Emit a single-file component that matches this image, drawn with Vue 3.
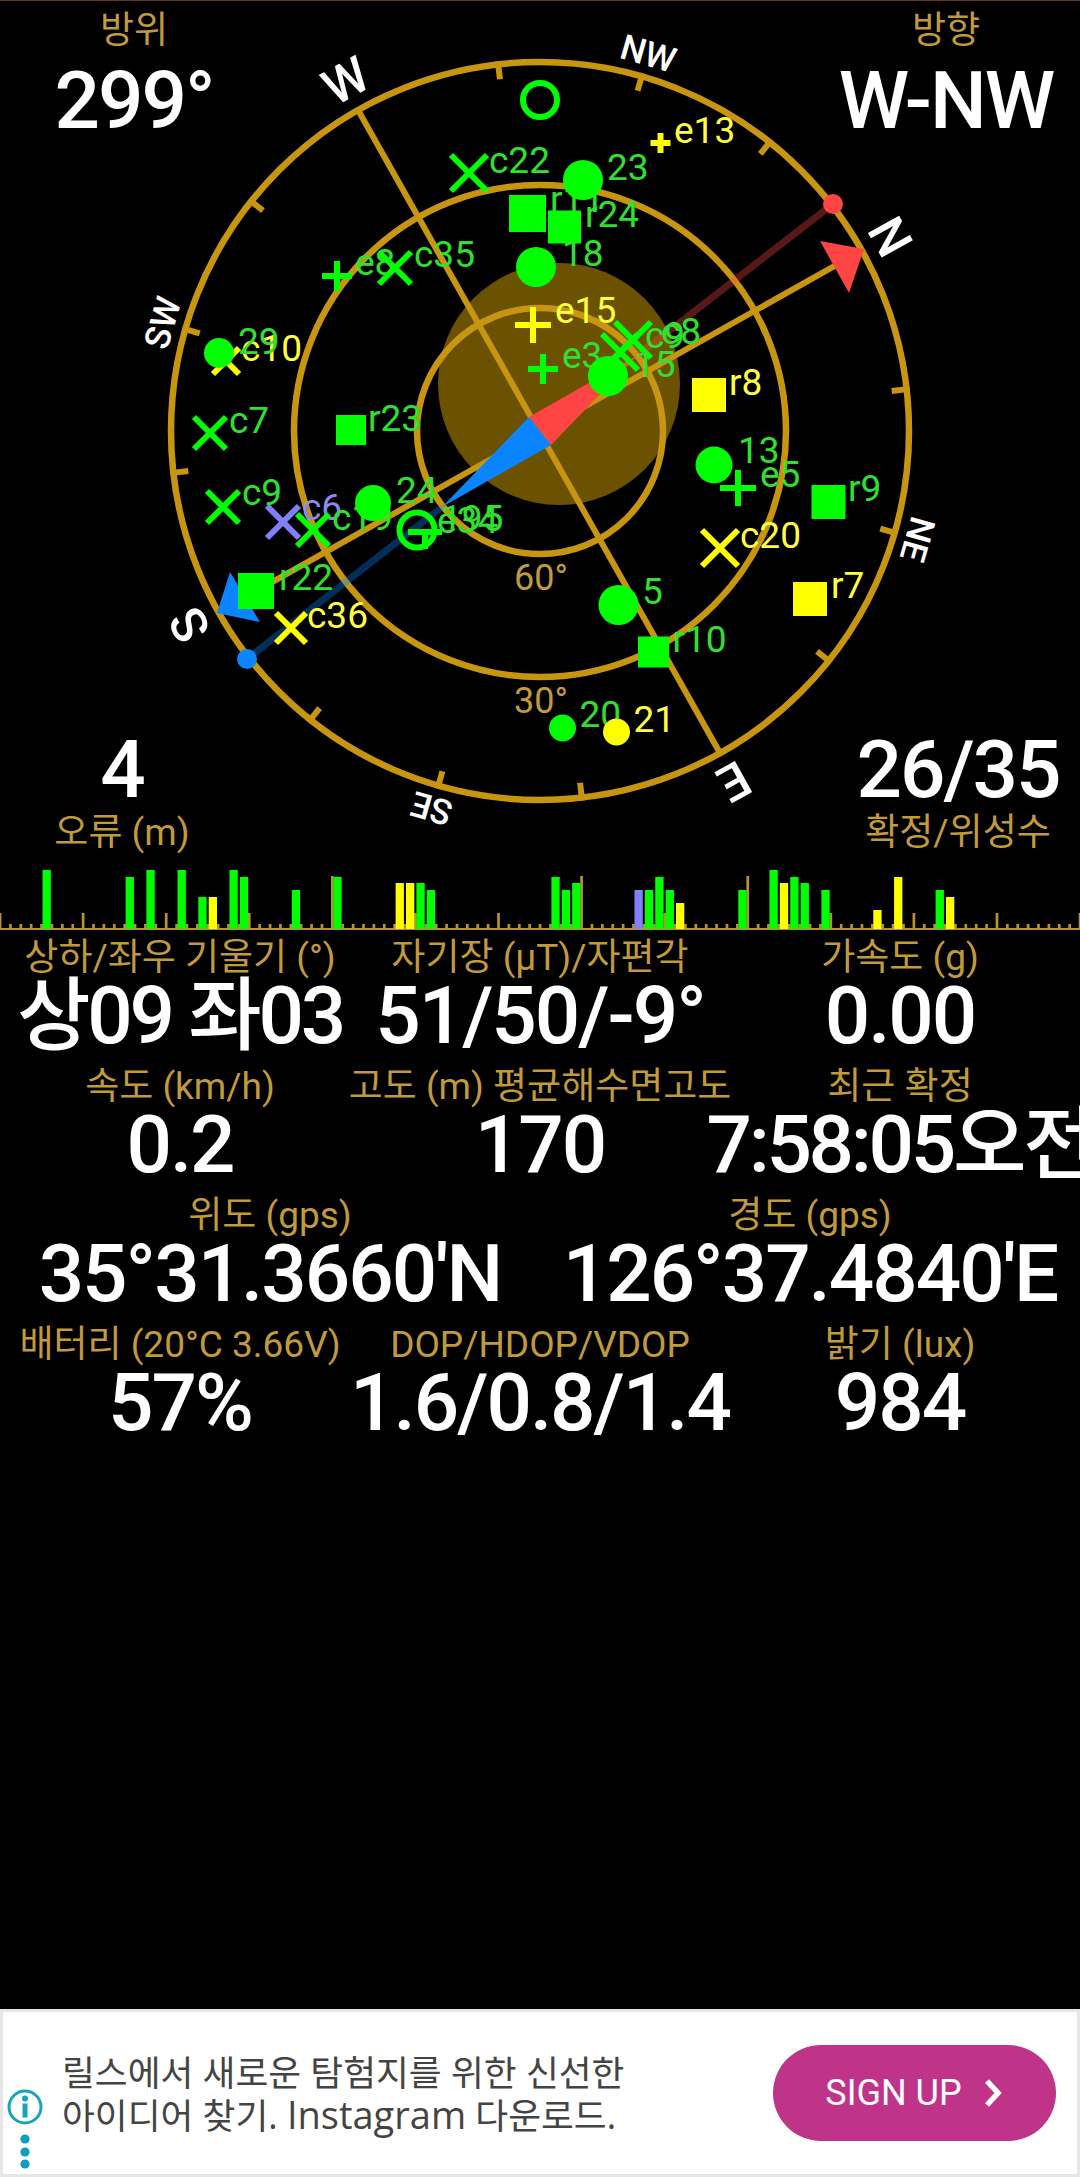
<script setup>
const CX = 540
const CY = 431
const R = 369

const directions = [
  { text: 'N', angle: 61, big: true },
  { text: 'NE', angle: 106 },
  { text: 'E', angle: 151, big: true },
  { text: 'SE', angle: 196 },
  { text: 'S', angle: 241, big: true },
  { text: 'SW', angle: 286 },
  { text: 'W', angle: 331, big: true },
  { text: 'NW', angle: 16 }
]

// every 22.5 deg, the four axis ends have the long lines instead
const ticks = Array.from({ length: 16 }, (_, i) => 61 + i * 22.5).filter((_, i) => i % 4 !== 0)

const GREEN = '#00ff00'
const YELLOW = '#ffff00'
const PURPLE = '#8080ff'

const sats = [
  { kind: 'x', x: 226, y: 361, s: 13, color: YELLOW, label: 'c10', lx: 241, ly: 361 },
  { kind: 'dot', x: 219, y: 353, s: 15, color: GREEN, label: '29', lx: 238, ly: 354 },
  { kind: 'x', x: 210, y: 433, s: 16, color: GREEN, label: 'c7', lx: 229, ly: 433 },
  { kind: 'x', x: 223, y: 507, s: 16, color: GREEN, label: 'c9', lx: 242, ly: 505 },
  { kind: 'x', x: 283, y: 522, s: 16, color: PURPLE, label: 'c6', lx: 302, ly: 520 },
  { kind: 'x', x: 313, y: 530, s: 16, color: GREEN, label: 'c19', lx: 332, ly: 530 },
  { kind: 'dot', x: 373, y: 503, s: 18, color: GREEN, label: '24', lx: 396, ly: 503 },
  { kind: 'tee', x: 425, y: 532, s: 17, color: GREEN, label: 'e34', lx: 437, ly: 533 },
  { kind: 'ring', x: 417, y: 530, s: 17.5, color: GREEN, label: '195', lx: 441, ly: 531 },
  { kind: 'square', x: 256, y: 591, s: 18, color: GREEN, label: 'r22', lx: 279, ly: 590 },
  { kind: 'x', x: 291, y: 628, s: 15, color: YELLOW, label: 'c36', lx: 307, ly: 628 },
  { kind: 'square', x: 351, y: 430, s: 15, color: GREEN, label: 'r23', lx: 368, ly: 431 },
  { kind: 'x', x: 469, y: 173, s: 18, color: GREEN, label: 'c22', lx: 489, ly: 173 },
  { kind: 'plus', x: 337, y: 276, s: 15, color: GREEN, label: 'e8', lx: 355, ly: 275 },
  { kind: 'x', x: 395, y: 268, s: 16, color: GREEN, label: 'c35', lx: 414, ly: 267 },
  { kind: 'ring', x: 540, y: 100, s: 17, color: GREEN },
  { kind: 'square', x: 527.5, y: 213.5, s: 18.5, color: GREEN, label: 'r11', lx: 550, ly: 212 },
  { kind: 'dot', x: 583, y: 180, s: 20, color: GREEN, label: '23', lx: 607, ly: 180 },
  { kind: 'square', x: 564.5, y: 227, s: 16.5, color: GREEN, label: 'r24', lx: 585, ly: 227 },
  { kind: 'dot', x: 536, y: 267, s: 20, color: GREEN, label: '18', lx: 562, ly: 266 },
  { kind: 'plus', x: 660.5, y: 143, s: 10, color: YELLOW, label: 'e13', lx: 674, ly: 143 },
  { kind: 'plus', x: 533, y: 325, s: 18, color: YELLOW, label: 'e15', lx: 555, ly: 323 },
  { kind: 'plus', x: 543, y: 369, s: 15, color: GREEN, label: 'e3', lx: 562, ly: 368 },
  { kind: 'x', x: 620, y: 352, s: 18, color: GREEN, label: 'c9', lx: 645, ly: 348 },
  { kind: 'x', x: 633, y: 340, s: 18, color: GREEN, label: 'c8', lx: 661, ly: 344 },
  { kind: 'dot', x: 608, y: 376, s: 20, color: GREEN, label: '15', lx: 634, ly: 377 },
  { kind: 'square', x: 709, y: 395, s: 17, color: YELLOW, label: 'r8', lx: 729, ly: 395 },
  { kind: 'dot', x: 714, y: 465, s: 18.5, color: GREEN, label: '13', lx: 738, ly: 463 },
  { kind: 'plus', x: 738, y: 488, s: 18, color: GREEN, label: 'e5', lx: 760, ly: 487 },
  { kind: 'square', x: 828.5, y: 502, s: 17, color: GREEN, label: 'r9', lx: 848, ly: 501 },
  { kind: 'x', x: 720, y: 548, s: 18, color: YELLOW, label: 'c20', lx: 740, ly: 548 },
  { kind: 'square', x: 810, y: 599, s: 17, color: YELLOW, label: 'r7', lx: 831, ly: 598 },
  { kind: 'dot', x: 618.5, y: 605, s: 20, color: GREEN, label: '5', lx: 642, ly: 604 },
  { kind: 'square', x: 653.5, y: 652, s: 15.5, color: GREEN, label: 'r10', lx: 672.5, ly: 652 },
  { kind: 'dot', x: 562.5, y: 728, s: 13.5, color: GREEN, label: '20', lx: 579.5, ly: 727 },
  { kind: 'dot', x: 616.5, y: 732, s: 13.5, color: YELLOW, label: '21', lx: 633.5, ly: 732 }
]

function labelColor(color) {
  if (color === GREEN) return '#30e030'
  if (color === YELLOW) return '#ffff40'
  return '#8a8ae8'
}

function crossPath(s) {
  if (s.kind === 'x') {
    return `M${s.x - s.s} ${s.y - s.s}L${s.x + s.s} ${s.y + s.s}M${s.x - s.s} ${s.y + s.s}L${s.x + s.s} ${s.y - s.s}`
  }
  // the top arm of this one isn't visible in the shot
  if (s.kind === 'tee') {
    return `M${s.x - s.s} ${s.y}H${s.x + s.s}M${s.x} ${s.y}V${s.y + s.s}`
  }
  return `M${s.x - s.s} ${s.y}H${s.x + s.s}M${s.x} ${s.y - s.s}V${s.y + s.s}`
}

// signal strength chart: 104 slots across the width, long tick every 8
const SLOT = 1080 / 104
const BASE = 64
const slots = Array.from({ length: 105 }, (_, i) => i)
const tallTicks = [32, 56, 72]

function tickHeight(i) {
  if (tallTicks.includes(i)) return 53
  return i % 8 === 0 ? 16 : 5
}

const bars = [
  [4, 59, GREEN], [12, 52, GREEN], [14, 59, GREEN], [17, 59, GREEN], [19, 32, GREEN], [20, 32, YELLOW],
  [22, 59, GREEN], [23, 52, GREEN], [28, 39, GREEN], [32, 52, GREEN], [38, 46, YELLOW], [39, 46, YELLOW],
  [40, 46, GREEN], [41, 39, GREEN], [53, 52, GREEN], [54, 39, GREEN], [55, 46, GREEN], [61, 39, PURPLE],
  [62, 39, GREEN], [63, 52, GREEN], [64, 39, GREEN], [65, 26, YELLOW], [71, 39, GREEN], [74, 59, GREEN],
  [75, 46, YELLOW], [76, 52, GREEN], [77, 46, GREEN], [79, 39, GREEN], [84, 19, YELLOW], [86, 52, YELLOW],
  [90, 39, GREEN], [91, 32, YELLOW]
]

const statRows = [
  [
    { label: '상하/좌우 기울기 (°)', value: '상09 좌03', tight: true },
    { label: '자기장 (µT)/자편각', value: '51/50/-9°' },
    { label: '가속도 (g)', value: '0.00' }
  ],
  [
    { label: '속도 (km/h)', value: '0.2' },
    { label: '고도 (m) 평균해수면고도', value: '170' },
    { label: '최근 확정', value: '7:58:05오전', tight: true }
  ],
  [
    { label: '위도 (gps)', value: "35°31.3660'N" },
    { label: '경도 (gps)', value: "126°37.4840'E" }
  ],
  [
    { label: '배터리 (20°C 3.66V)', value: '57%' },
    { label: 'DOP/HDOP/VDOP', value: '1.6/0.8/1.4' },
    { label: '밝기 (lux)', value: '984' }
  ]
]
</script>

<template>
  <div class="page">
    <section class="compass-panel">
      <svg class="compass" width="1080" height="865" viewBox="0 0 1080 865">
        <circle class="sun" cx="559" cy="384" r="121" />
        <g class="grid-lines">
          <circle :cx="CX" :cy="CY" :r="R" />
          <circle :cx="CX" :cy="CY" r="246" />
          <circle :cx="CX" :cy="CY" r="123" />
          <line x1="358" y1="110" x2="720" y2="753" />
          <line x1="217" y1="613" x2="863" y2="250" />
          <line
            v-for="a in ticks"
            :key="a"
            :x1="CX"
            :y1="CY - R - 3"
            :x2="CX"
            :y2="CY - R + 15"
            :transform="`rotate(${a} ${CX} ${CY})`"
          />
        </g>
        <text class="elevation" x="541" y="590" text-anchor="middle">60°</text>
        <text class="elevation" x="541" y="713" text-anchor="middle">30°</text>

        <text
          v-for="d in directions"
          :key="d.text"
          :class="d.big ? 'dir-big' : 'dir-small'"
          :x="CX"
          :y="CY - (d.big ? 400 : 392)"
          text-anchor="middle"
          dominant-baseline="central"
          :transform="`rotate(${d.angle} ${CX} ${CY})`"
        >{{ d.text }}</text>

        <line class="needle-red-line" x1="638" y1="355" x2="833" y2="204" />
        <line class="needle-blue-line" x1="442" y1="507" x2="247" y2="659" />
        <circle class="red" cx="833" cy="204" r="10" />
        <circle class="blue" cx="247" cy="659" r="10" />
        <polygon class="red" points="820,241 864,249 849,293" />
        <polygon class="blue" points="230,572 217,613 260,622" />
        <polygon class="red" points="529,417 551,445 638,355" />
        <polygon class="blue" points="529,417 551,445 442,507" />

        <g v-for="(s, i) in sats" :key="i">
          <circle v-if="s.kind === 'dot'" :cx="s.x" :cy="s.y" :r="s.s" :fill="s.color" />
          <circle v-else-if="s.kind === 'ring'" class="ring" :cx="s.x" :cy="s.y" :r="s.s" :stroke="s.color" />
          <rect
            v-else-if="s.kind === 'square'"
            :x="s.x - s.s"
            :y="s.y - s.s"
            :width="s.s * 2"
            :height="s.s * 2"
            :fill="s.color"
          />
          <path v-else class="cross" :d="crossPath(s)" :stroke="s.color" />
          <text v-if="s.label" class="sat-label" :x="s.lx" :y="s.ly" :fill="labelColor(s.color)">{{ s.label }}</text>
        </g>
      </svg>

      <div class="corner-row top">
        <div class="corner-stat">
          <div class="label">방위</div>
          <div class="value">299°</div>
        </div>
        <div class="corner-stat">
          <div class="label">방향</div>
          <div class="value">W-NW</div>
        </div>
      </div>
      <div class="corner-row bottom">
        <div class="corner-stat narrow">
          <div class="value">4</div>
          <div class="label">오류 (m)</div>
        </div>
        <div class="corner-stat narrow">
          <div class="value">26/35</div>
          <div class="label">확정/위성수</div>
        </div>
      </div>
    </section>

    <svg class="signal" width="1080" height="66" viewBox="0 0 1080 66">
      <rect class="signal-base" x="0" :y="BASE - 1" width="1080" height="2" />
      <rect
        v-for="i in slots"
        :key="i"
        class="signal-base"
        :x="i * SLOT - 1.3"
        :y="BASE - tickHeight(i)"
        width="2.7"
        :height="tickHeight(i)"
      />
      <rect
        v-for="b in bars"
        :key="b[0]"
        :x="b[0] * SLOT + 1"
        :y="BASE - b[1]"
        width="8.3"
        :height="b[1]"
        :fill="b[2]"
      />
    </svg>

    <section class="stats">
      <div v-for="(row, r) in statRows" :key="r" class="stat-row">
        <div v-for="stat in row" :key="stat.label" class="stat">
          <div class="label">{{ stat.label }}</div>
          <div class="value" :class="{ tight: stat.tight }">{{ stat.value }}</div>
        </div>
      </div>
    </section>

    <div class="ad">
      <svg class="ad-icons" width="44" height="85" viewBox="0 0 44 85">
        <circle cx="22" cy="20" r="16" fill="none" stroke="#1aa3bd" stroke-width="3" />
        <circle cx="22" cy="11.5" r="3" fill="#1aa3bd" />
        <rect x="19.5" y="16.5" width="5" height="14" fill="#1aa3bd" />
        <circle cx="22" cy="52" r="4.6" fill="#0e9fbf" />
        <circle cx="22" cy="65" r="4.6" fill="#0e9fbf" />
        <circle cx="22" cy="77" r="4.6" fill="#0e9fbf" />
      </svg>
      <div class="ad-text">릴스에서 새로운 탐험지를 위한 신선한<br />아이디어 찾기. <span class="ad-latin">Instagram</span> 다운로드.</div>
      <div class="ad-button">
        <span>SIGN UP</span>
        <svg width="22" height="30" viewBox="0 0 22 30">
          <path d="M5 3l11 12L5 27" fill="none" stroke="#fff" stroke-width="5.5" />
        </svg>
      </div>
    </div>
  </div>
</template>

<style scoped>
.page {
  width: 1080px;
  height: 2177px;
  display: flex;
  flex-direction: column;
  background: #000;
  overflow: hidden;
  font-family: Roboto, "Noto Sans CJK KR", sans-serif;
  border-top: 1px solid #6a3020;
  box-sizing: border-box;
}

.compass-panel {
  position: relative;
  height: 864px;
  flex: none;
  display: flex;
  flex-direction: column;
  justify-content: space-between;
}

.compass {
  position: absolute;
  left: 0;
  top: -1px;
}

.sun {
  fill: #6b5200;
}

.grid-lines circle {
  fill: none;
  stroke: #c7950f;
  stroke-width: 6.5;
}

.grid-lines line {
  stroke: #c7950f;
  stroke-width: 6;
}

.elevation {
  font-size: 36px;
  fill: #c19a3c;
}

.dir-big,
.dir-small {
  fill: #fff;
  font-weight: 500;
}

.dir-big {
  font-size: 50px;
}

.dir-small {
  font-size: 35px;
}

.needle-red-line {
  stroke: #ff4444;
  stroke-opacity: 0.35;
  stroke-width: 7;
}

.needle-blue-line {
  stroke: #0a84ff;
  stroke-opacity: 0.35;
  stroke-width: 7;
}

.red {
  fill: #ff4444;
}

.blue {
  fill: #0a84ff;
}

.ring {
  fill: none;
  stroke-width: 6;
}

.cross {
  fill: none;
  stroke-width: 6;
}

.sat-label {
  font-size: 37px;
}

.corner-row {
  position: relative;
  display: flex;
  justify-content: space-between;
  text-align: center;
}

.corner-stat {
  width: 268px;
}

.corner-stat.narrow {
  width: 244px;
}

.label {
  color: #c19a3c;
  font-size: 37px;
  line-height: 40px;
  white-space: nowrap;
}

.value {
  color: #fff;
  font-size: 80px;
  font-weight: 500;
  letter-spacing: -2px;
  line-height: 76px;
  white-space: nowrap;
}

.value.tight {
  letter-spacing: -3.3px;
}

.top {
  padding-top: 10px;
}

.top .value {
  margin-top: 12px;
}

.bottom {
  padding-bottom: 12px;
}

.bottom .value {
  margin-bottom: 5px;
}

.signal {
  display: block;
  flex: none;
}

.signal-base {
  fill: #b8922e;
}

.stats {
  display: flex;
  flex-direction: column;
  gap: 13px;
  padding-top: 7px;
}

.stat-row {
  display: flex;
}

.stat {
  flex: 1 1 0;
  min-width: 0;
  display: flex;
  flex-direction: column;
  align-items: center;
}

.ad {
  margin-top: auto;
  height: 168px;
  box-sizing: border-box;
  flex: none;
  display: flex;
  align-items: center;
  background: #fff;
  border: 3px solid #e6e6e6;
  padding-right: 21px;
}

.ad-icons {
  align-self: flex-end;
  flex: none;
  margin-bottom: 2px;
}

.ad-text {
  flex: 1;
  margin-left: 15px;
  color: #444;
  font-family: "Open Sans", "Noto Sans CJK KR", sans-serif;
  font-size: 35.7px;
  line-height: 42px;
  white-space: nowrap;
}

.ad-latin {
  font-size: 38px;
}

.ad-button {
  width: 283px;
  height: 96px;
  flex: none;
  display: flex;
  align-items: center;
  justify-content: center;
  gap: 20px;
  border-radius: 48px;
  background: #bf3488;
  color: #fff;
  font-size: 36px;
}
</style>

<style>
html,
body {
  background: #000;
}
</style>
